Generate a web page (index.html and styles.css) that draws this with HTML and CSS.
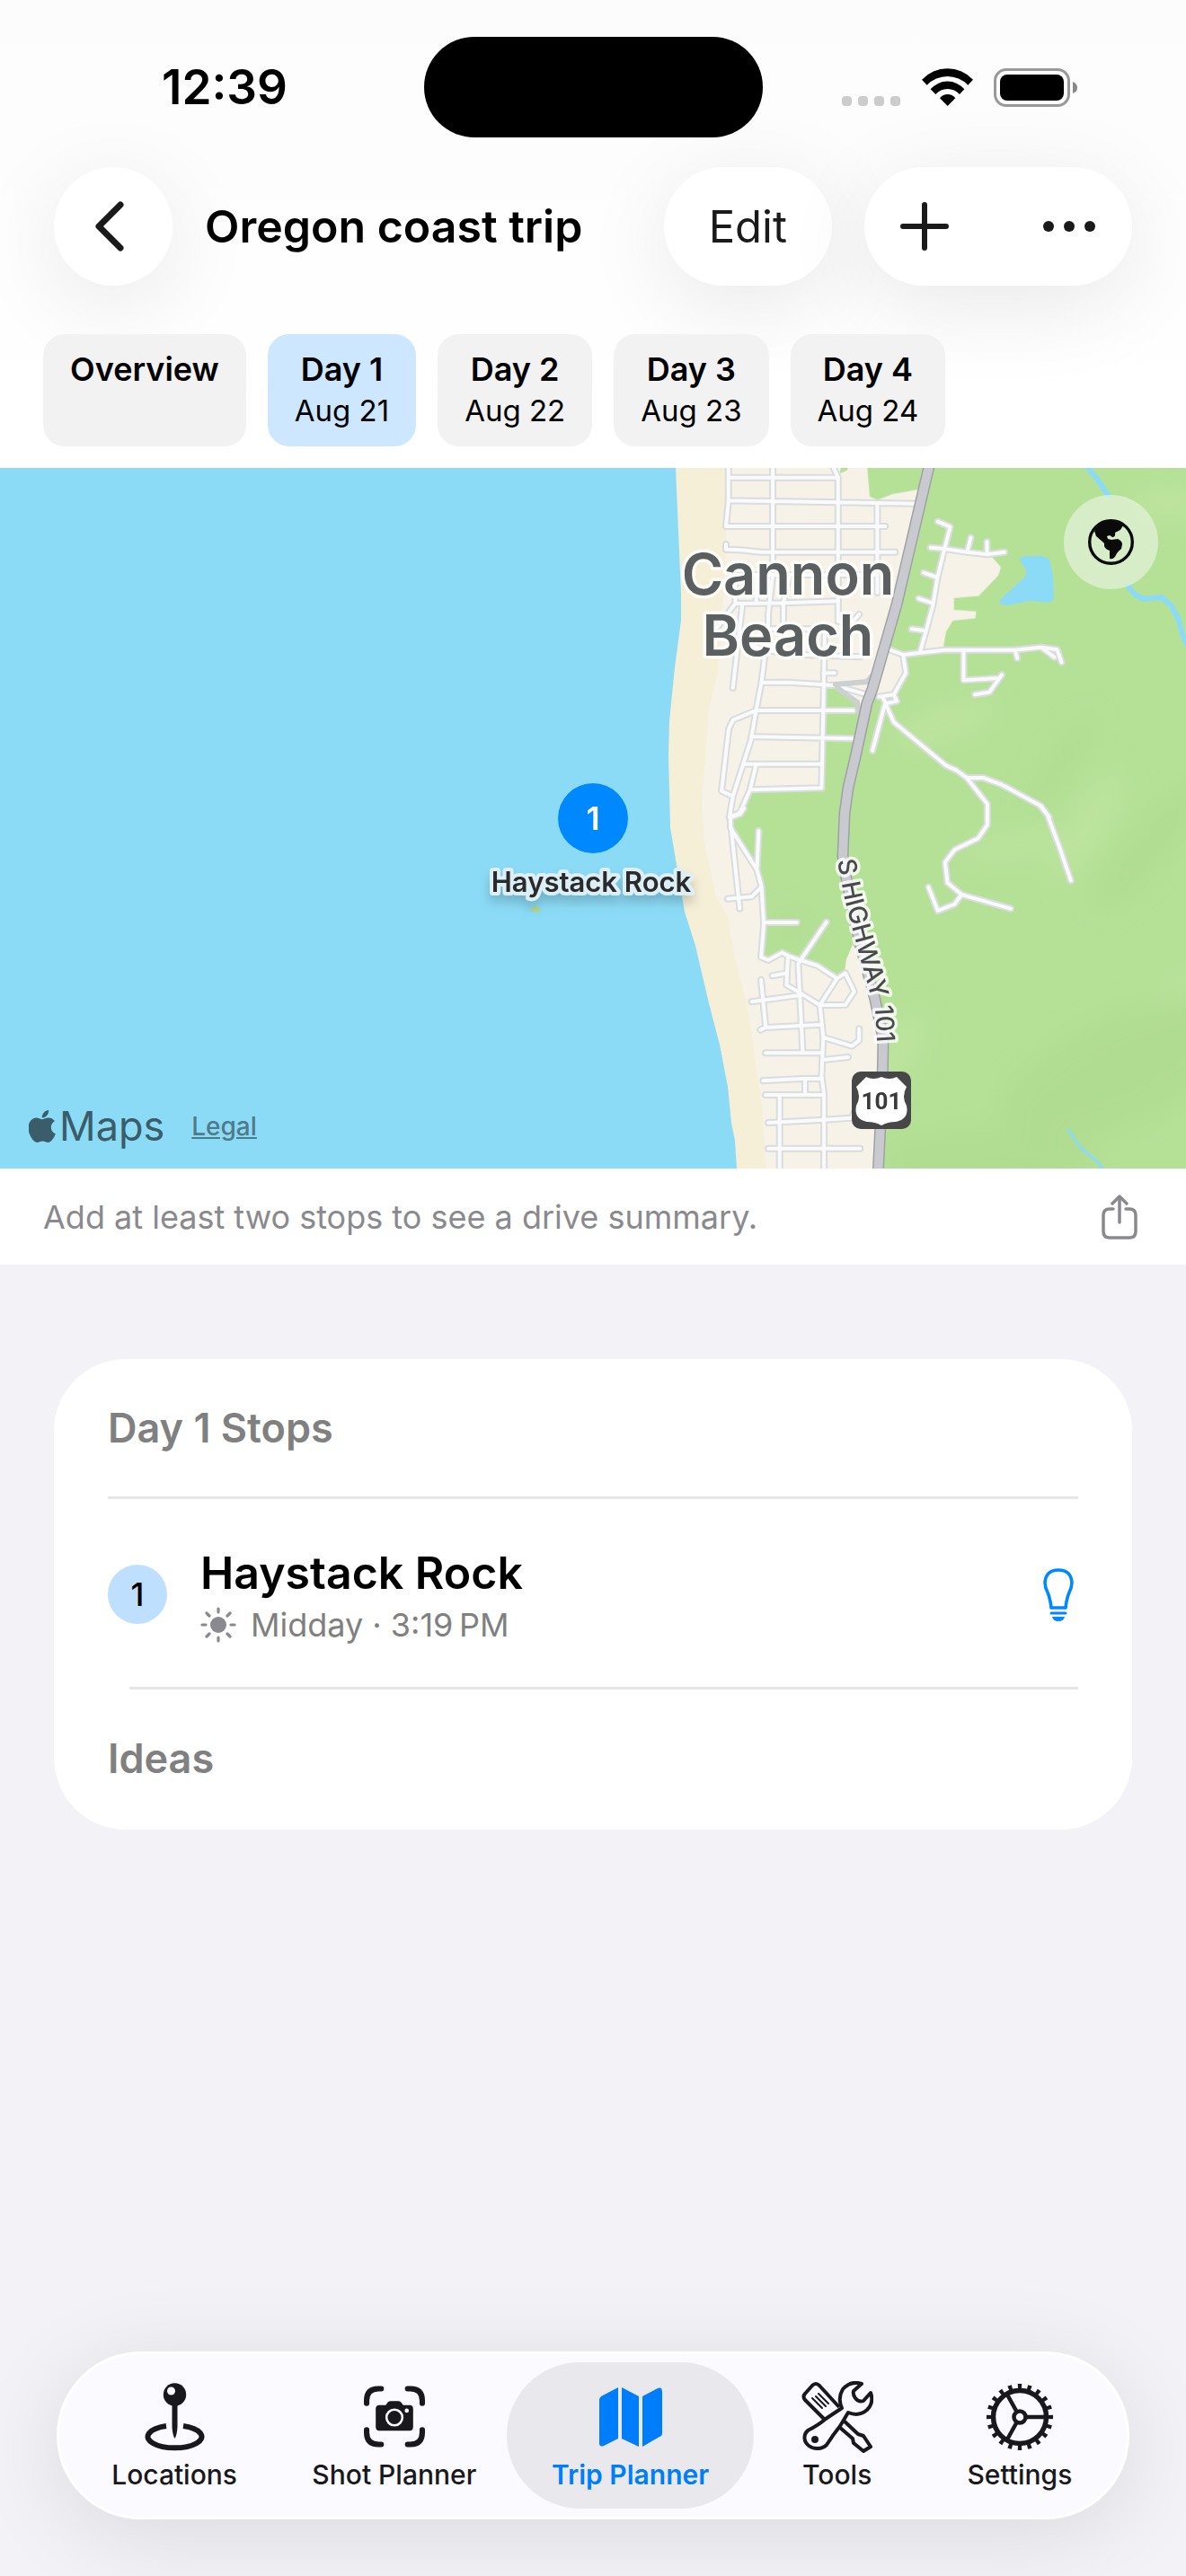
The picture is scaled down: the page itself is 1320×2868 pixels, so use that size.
FILE: index.html
```html
<!DOCTYPE html>
<html lang="en">
<head>
  <meta charset="UTF-8">
  <meta name="viewport" content="width=device-width, initial-scale=1.0">
  <title>Oregon coast trip</title>
  <link rel="stylesheet" href="styles.css">
</head>
<body>
  <header class="header">
    <div class="status">
      <time class="status-time">12:39</time>
      <div class="island"></div>
      <div class="status-icons">
        <svg class="signal" width="66" height="12" viewBox="0 0 66 12">
          <rect width="11" height="11" rx="4" />
          <rect x="18" width="11" height="11" rx="4" />
          <rect x="36" width="11" height="11" rx="4" />
          <rect x="54" width="11" height="11" rx="4" />
        </svg>
        <svg width="57" height="42" viewBox="0 0 171 126">
          <path d="M0 38A116 116 0 0 1 171 38L154 56A95 95 0 0 0 17 56Z" />
          <path d="M29 70A74 74 0 0 1 142 70L126 87A53 53 0 0 0 46 87Z" />
          <path d="M60 100A32 32 0 0 1 112 100L86 126Z" />
        </svg>
        <svg width="94" height="43" viewBox="0 0 94 43">
          <rect x="1.5" y="1.5" width="82" height="40" rx="12.5" fill="none" stroke="#999" stroke-width="3" />
          <rect x="7" y="7" width="71" height="29" rx="8" />
          <path d="M88 15q5 2 5 6.5t-5 6.5z" fill="#888" />
        </svg>
      </div>
    </div>

    <div class="nav">
      <button class="glass back" type="button" aria-label="Back">
        <svg width="42" height="58" viewBox="0 0 42 58">
          <path d="M29 5L5 29l24 24" fill="none" stroke="#1a1a1a" stroke-width="7" stroke-linecap="round" stroke-linejoin="round" />
        </svg>
      </button>
      <h1>Oregon coast trip</h1>
      <button class="glass edit" type="button">Edit</button>
      <div class="glass actions">
        <button type="button" aria-label="Add">
          <svg width="54" height="54" viewBox="0 0 54 54">
            <path d="M27 3v48M3 27h48" stroke="#1a1a1a" stroke-width="6" stroke-linecap="round" />
          </svg>
        </button>
        <button type="button" aria-label="More">
          <svg width="60" height="14" viewBox="0 0 60 14" fill="#1a1a1a">
            <circle cx="7" cy="7" r="6" />
            <circle cx="30" cy="7" r="6" />
            <circle cx="53" cy="7" r="6" />
          </svg>
        </button>
      </div>
    </div>

    <div class="days">
      <button class="day" type="button"><b>Overview</b></button>
      <button class="day selected" type="button"><b>Day 1</b><span>Aug 21</span></button>
      <button class="day" type="button"><b>Day 2</b><span>Aug 22</span></button>
      <button class="day" type="button"><b>Day 3</b><span>Aug 23</span></button>
      <button class="day" type="button"><b>Day 4</b><span>Aug 24</span></button>
    </div>
  </header>

  <main>
    <section class="map">
      <svg class="map-canvas" viewBox="0 0 1320 780" preserveAspectRatio="xMidYMid slice">
        <defs>
          <filter id="soft" x="-50%" y="-50%" width="200%" height="200%">
            <feGaussianBlur stdDeviation="14" />
          </filter>
          <filter id="label-shadow" x="-10%" y="-50%" width="120%" height="250%">
            <feDropShadow dx="0" dy="8" stdDeviation="6" flood-color="#000" flood-opacity=".18" />
          </filter>
          <!-- town streets, north half and south half -->
          <g id="streets">
            <g transform="translate(720 -11) scale(.3827 .3333)">
              <path d="M237 20V145L230 228H693M366 20V345M543 33L556 65V545L580 548 600 545 617 522M237 65H556M237 142L556 148 780 152M670 150V450M230 288V305L270 307 330 314H722" />
              <path d="M257 390H670M257 395V486M318 395V486M366 390L353 520V570M414 395L397 486V550M205 565L257 486 400 484 556 478M278 486L250 768M300 571H515M300 628L350 640 400 655 620 664" />
              <path d="M345 640L333 750 318 840 303 940 250 1130 240 1200M517 580L513 840 508 1102 300 1108 270 1185 240 1200M513 718H546M333 750L410 749 515 757 550 760 640 790M600 843H318L250 875 238 905 217 1112 250 1130M303 930L600 937M280 1022H508M318 1022L300 1108" />
              <path d="M846 212L882 230 865 305 845 400 832 490 812 577 795 645M825 299L865 303 930 314 990 322 1040 314M931 314L942 266M989 322V280M845 399L805 383M832 485L790 469M812 577L770 571" />
              <path d="M705 640L745 657 865 641H1070L1146 632 1193 640 1206 682M1146 632L1185 665M1071 641L1077 668M921 641V742L1025 735 1032 724 996 782 954 790M745 657L753 718 718 790 675 797M718 790L727 812 695 820 685 797M693 818L656 977M693 818L718 882 870 1027 900 1043 930 1068 990 1155V1215M930 1068H978L1030 1090 1146 1162 1170 1200" />
            </g>
            <g transform="translate(720 379) scale(.3827 .3333)">
              <path d="M243 10V65L320 205 333 260 340 385 332 497 353 507 393 482 415 495 495 525 553 568 503 657H577L603 612 577 550 553 568M282 0L272 18 243 30M325 75L320 205M245 65L270 335M235 302L305 295 333 262M340 381H436M522 380L448 505 440 520 453 810M410 495L406 590 450 620 503 657 513 765 508 895 515 955V1215M365 559L408 550" />
              <path d="M305 646L450 623M332 573L345 725M330 740L345 732 510 722M513 765L596 794 617 775V736M345 817H508M513 840L585 831M338 910L450 903H508M460 903V955M345 957H515M386 957V1215M353 1050L515 1040 595 1034 605 1010M353 1136H620" />
              <path d="M990 0V55L963 100 895 138 867 180 874 248 915 288 895 320 846 342 819 263M915 288L1058 335M1146 -5L1165 22 1200 130 1233 241" />
            </g>
          </g>
          <path id="highway" d="M1035 -6L998 152 971 246 965 262 952 322 944 356 940 385 938 432 942 457 957 529 974 592 983 636 982 690 977 790" />
          <path id="highway-label" d="M932 437L940 480 958 548 974 604 978 670" />
        </defs>

        <rect class="water" width="1320" height="780" />
        <path class="beach" d="M752 0L758 140 758 170 751 222 745 282 744 320 746 400 753 442 762 494 774 532 789 596 801 642 810 689 814 729 818 749 820 780H1320V0Z" />
        <path class="forest" d="M835 0H1320V780H950V700L845 560 810 480V330Z" />

        <g class="hills" filter="url(#soft)">
          <ellipse class="light" cx="1050" cy="285" rx="60" ry="18" transform="rotate(-20 1050 285)" />
          <ellipse class="light" cx="1130" cy="420" rx="60" ry="12" transform="rotate(-12 1130 420)" />
          <ellipse class="light" cx="1210" cy="400" rx="18" ry="70" transform="rotate(32 1210 400)" />
          <ellipse class="light" cx="1000" cy="650" rx="18" ry="50" transform="rotate(30 1000 650)" />
          <ellipse class="light" cx="1290" cy="600" rx="60" ry="10" transform="rotate(-40 1290 600)" />
          <ellipse class="light" cx="1300" cy="40" rx="40" ry="20" />
          <ellipse class="dark" cx="1180" cy="330" rx="12" ry="64" transform="rotate(36 1180 330)" />
          <ellipse class="dark" cx="1280" cy="420" rx="20" ry="90" transform="rotate(40 1280 420)" />
          <ellipse class="dark" cx="1250" cy="670" rx="150" ry="60" transform="rotate(-24 1250 670)" />
          <ellipse class="dark" cx="1100" cy="770" rx="120" ry="30" />
          <ellipse class="dark" cx="880" cy="510" rx="24" ry="10" transform="rotate(-40 880 510)" />
        </g>

        <g class="town">
          <path transform="translate(720 -11) scale(.3827 .3333)" d="M230 20H567L560 52 583 40 587 20H640L648 128 670 140 715 120 790 105 720 490 655 770 628 890 605 820 545 765 515 770 512 1105 300 1110 270 1190 240 1210H162L160 1120 172 980 178 850 205 720 215 600 230 300ZM705 640L745 657 755 720 718 790 650 800 670 700ZM865 305L1000 325 1030 365 1022 392 965 460 893 468V507L958 512 955 535 890 543 870 580 862 632 797 645Z" />
          <path transform="translate(720 379) scale(.3827 .3333)" d="M162 0H243V70L320 210 335 260 340 400 330 495 350 508 395 480 450 510 550 565 575 545 580 505 598 455 640 520 670 640 700 800 672 1210H347L335 1000 310 800 290 650 260 520 235 360 200 290 165 100Z" />
        </g>

        <path class="water" d="M1134 101L1141 98H1160L1168 101 1172 119 1173 146 1168 150 1146 148 1122 153 1112 151 1114 146 1141 121 1143 115Z" />
        <path class="stream" d="M1209 -2L1221 12 1233 30M1256 132L1262 140 1273 146 1293 144 1304 154 1312 169 1316 186 1322 198" />
        <path class="creek" d="M1189 737L1203 757 1222 773 1229 782" />

        <use href="#streets" class="street-edge" />
        <use href="#streets" class="street" />
        <path class="ramp" d="M930 241L965 238 972 230M932 245L954 261 959 284" />
        <use href="#highway" class="highway-edge" />
        <use href="#highway" class="highway" />

        <text class="city"><tspan x="877" y="141">Cannon</tspan><tspan x="877" y="209">Beach</tspan></text>
        <text class="highway-name"><textPath href="#highway-label">S HIGHWAY 101</textPath></text>

        <g class="shield">
          <rect x="948" y="672" width="66" height="64" rx="10" fill="#474747" />
          <path fill="#fff" d="M964 678q8 4 17 0 9 4 17 0l11 11q-6 11 0 21 3 15-12 18-9 0-16 4-7-4-16-4-15-3-12-18 6-10 0-21z" />
          <text x="981" y="714">101</text>
        </g>

        <path d="M590 493l5-6 7 4-2 4z" fill="#b3d98a" />
        <circle cx="660" cy="390" r="39" fill="#08f" />
        <text class="pin-number" x="660" y="403">1</text>
        <g filter="url(#label-shadow)">
          <text class="pin-name" x="658" y="472">Haystack Rock</text>
        </g>
      </svg>

      <button class="globe" type="button" aria-label="Map style">
        <svg width="51" height="51" viewBox="0 0 51 51" fill="#0a0a0a">
          <circle cx="25.5" cy="25.5" r="23.8" fill="none" stroke="#0a0a0a" stroke-width="3.4" />
          <path d="M7 13Q13 3 25 1 33 2 39 7L36 12 30 15Q31 20 27 20L24 18 21 19 22 22 26 23 33 22Q38 24 38 28L37 33Q32 37 31 40 29 45 24 44L24 35Q17 33 18 27L16 25 9 19Z" />
        </svg>
      </button>

      <div class="attribution">
        <a class="brand" href="#">
          <svg width="30" height="36" viewBox="19 4 135 162">
            <path d="M150.37 130.25c-2.45 5.66-5.35 10.87-8.71 15.66-4.58 6.53-8.33 11.05-11.22 13.56-4.48 4.12-9.28 6.23-14.42 6.35-3.69 0-8.14-1.05-13.32-3.18-5.2-2.12-9.97-3.17-14.34-3.17-4.58 0-9.49 1.05-14.75 3.17-5.26 2.13-9.5 3.24-12.74 3.35-4.93.21-9.84-1.96-14.75-6.52-3.13-2.73-7.04-7.41-11.73-14.04-5.03-7.08-9.17-15.29-12.41-24.65-3.47-10.11-5.21-19.9-5.21-29.38 0-10.86 2.34-20.22 7.04-28.07 3.69-6.3 8.61-11.27 14.76-14.92s12.79-5.51 19.95-5.63c3.91 0 9.05 1.21 15.43 3.59 6.36 2.39 10.44 3.6 12.24 3.6 1.34 0 5.87-1.42 13.57-4.24 7.27-2.62 13.41-3.7 18.44-3.27 13.63 1.1 23.87 6.47 30.68 16.15-12.19 7.39-18.22 17.73-18.1 31 .11 10.34 3.86 18.94 11.23 25.77 3.34 3.17 7.07 5.62 11.22 7.36-.9 2.61-1.85 5.11-2.86 7.51zM119.11 7.24c0 8.1-2.96 15.67-8.86 22.67-7.12 8.32-15.73 13.13-25.07 12.37-.5-8.9 3.2-19.1 9.21-25.98 3-3.45 6.82-6.31 11.45-8.6 4.62-2.25 8.99-3.5 13.1-3.71z" />
          </svg>
          Maps
        </a>
        <a class="legal" href="#">Legal</a>
      </div>
    </section>

    <div class="summary">
      <p>Add at least two stops to see a drive summary.</p>
      <button type="button" aria-label="Share">
        <svg width="40" height="50" viewBox="0 0 40 50" fill="none" stroke="#8a8a8e" stroke-width="3.5" stroke-linecap="round" stroke-linejoin="round">
          <path d="M13 16H9q-7 0-7 7v18q0 7 7 7h22q7 0 7-7V23q0-7-7-7h-4M20 31V2M12 10l8-8 8 8" />
        </svg>
      </button>
    </div>

    <section class="card">
      <h2>Day 1 Stops</h2>
      <div class="stop">
        <span class="stop-number">1</span>
        <div class="stop-text">
          <h3>Haystack Rock</h3>
          <p>
            <svg width="40" height="40" viewBox="0 0 40 40">
              <circle cx="20" cy="20" r="9" fill="#8a8a8e" />
              <path d="M20 2v4M20 34v4M2 20h4M34 20h4M7 7l3 3M30 30l3 3M7 33l3-3M30 10l3-3" stroke="#8a8a8e" stroke-width="3.2" stroke-linecap="round" />
            </svg>
            Midday&nbsp;·&nbsp;3:19&thinsp;PM
          </p>
        </div>
        <button class="idea" type="button" aria-label="Idea">
          <svg width="36" height="60" viewBox="0 0 36 60" fill="none" stroke="#08f" stroke-width="3.6" stroke-linejoin="round">
            <path d="M10 45Q9 35 6 28 3 22 3 17 4 3 18 3T33 17Q33 22 30 28 27 35 26 45Z" />
            <path d="M10 51h16" stroke-width="3" stroke-linecap="round" />
            <path d="M11 55h14q-1 5-7 5t-7-5z" fill="#08f" stroke="none" />
          </svg>
        </button>
      </div>
      <h2>Ideas</h2>
    </section>
  </main>

  <nav class="tabs">
    <a class="tab" href="#">
      <svg width="67" height="76" viewBox="0 0 67 76">
        <circle cx="33.5" cy="13" r="12.7" />
        <circle cx="29.5" cy="9" r="4.5" fill="#fbfaff" />
        <path d="M30.5 24h6v25q-.5 9-3 13-2.5-4-3-13z" />
        <path d="M24 48A30 12.5 0 1 0 43 48" fill="none" stroke="currentColor" stroke-width="6" />
      </svg>
      Locations
    </a>
    <a class="tab" href="#">
      <svg width="68" height="76" viewBox="0 -4 67 76">
        <path d="M3 19v-3q0-13 13-13h3M48 3h3q13 0 13 13v3M64 48v3q0 13-13 13h-3M19 64h-3Q3 64 3 51v-3" fill="none" stroke="currentColor" stroke-width="6" stroke-linecap="round" />
        <path d="M17 21h7l2-3q1-1.5 3-1.5h9q2 0 3 1.5l2 3h7q4 0 4 4v20q0 4-4 4H17q-4 0-4-4V25q0-4 4-4z" />
        <circle cx="33.5" cy="34.5" r="8.7" fill="none" stroke="#fbfaff" stroke-width="2.5" />
        <circle cx="47" cy="27" r="2.3" fill="#fbfaff" />
      </svg>
      Shot Planner
    </a>
    <a class="tab current" href="#">
      <svg width="70" height="76" viewBox="0 -5 70 76">
        <path d="M0 14q0-2 2-4L21 0v57L5 65q-5 2-5-3zM25 0l19 10v56L25 57zM48 10L65 1q5-2 5 4v46q0 3-3 4L48 66z" />
      </svg>
      Trip Planner
    </a>
    <a class="tab" href="#">
      <svg width="80" height="80" viewBox="0 0 80 80" fill="none" stroke="currentColor" stroke-width="4" stroke-linejoin="round">
        <path d="M26 43L4 21q-3-4 0-7l8-9q4-4 8 0l22 24" />
        <path d="M12 19l11 11M16 17l11 11M19 14l11 11" stroke-width="2" stroke-linecap="round" />
        <path d="M47 44l16 15 6 2 8 12-8 5-11-9-1-5-15-13" />
        <path class="wrench" d="M67 3L58 11Q57 15 60 19 64 24 69 22L77 13Q81 24 73 32 64 40 52 35L43 50Q35 60 28 71A14 12 0 1 1 7 55Q19 49 27 42L45 30Q40 19 46 9 55-1 67 3Z" />
        <circle cx="15" cy="65" r="4" fill="currentColor" stroke="none" />
      </svg>
      Tools
    </a>
    <a class="tab" href="#">
      <svg width="76" height="76" viewBox="0 0 76 76" fill="none" stroke="currentColor">
        <circle cx="38" cy="38" r="29.5" stroke-width="5.5" />
        <circle cx="38" cy="38" r="34" stroke-width="6" pathLength="200" stroke-dasharray="4 6" stroke-dashoffset="2" />
        <circle cx="38" cy="38" r="6.5" stroke-width="4.5" />
        <path d="M46 38h20M34 31L24 13M34 45L24 63" stroke-width="4.5" />
      </svg>
      Settings
    </a>
  </nav>
</body>
</html>
```
FILE: styles.css
```css
* {
  box-sizing: border-box;
}

body {
  display: flex;
  flex-direction: column;
  min-height: 100vh;
  margin: 0;
  background: #f2f2f7;
  color: #000;
  font-family: Inter, "Liberation Sans", sans-serif;
}

h1,
h2,
h3,
p {
  margin: 0;
}

svg {
  display: block;
  flex: none;
}

button {
  padding: 0;
  border: 0;
  background: none;
  color: inherit;
  font: inherit;
}

a {
  color: inherit;
  text-decoration: none;
}

/* header */

.header {
  padding: 41px 0 24px;
  background: linear-gradient(#fcfcfc, #fff 90%);
  overflow: hidden;
}

.status {
  display: grid;
  grid-template-columns: 1fr 377px 1fr;
  align-items: center;
}

.status-time {
  padding-left: 180px;
  font-size: 53px;
  font-weight: 600;
}

.island {
  height: 112px;
  border-radius: 56px;
  background: #000;
}

.status-icons {
  display: flex;
  align-items: center;
  justify-content: flex-end;
  gap: 23px;
  padding-right: 120px;
}

.signal {
  align-self: flex-end;
  fill: #ccc;
}

.nav {
  display: flex;
  align-items: center;
  margin-top: 33px;
  padding: 0 60px;
}

.nav h1 {
  flex: 1;
  margin-left: 36px;
  font-size: 50px;
  font-weight: 600;
}

.glass {
  display: flex;
  align-items: center;
  justify-content: center;
  height: 132px;
  border-radius: 66px;
  background: #fff;
  box-shadow: 0 20px 100px rgba(0, 0, 0, 0.09);
}

.back {
  width: 132px;
}

.edit {
  margin-right: 36px;
  padding: 0 50px;
  color: #1a1a1a;
  font-size: 49px;
}

.actions {
  justify-content: space-between;
  width: 298px;
  padding: 0 40px;
}

.days {
  display: flex;
  gap: 24px;
  margin-top: 54px;
  padding: 0 48px;
}

.day {
  display: flex;
  flex-direction: column;
  align-items: center;
  height: 125px;
  padding: 16px 30px;
  border-radius: 24px;
  background: #f2f2f2;
  font-size: 33px;
  line-height: 46px;
}

.day b {
  font-size: 36px;
  font-weight: 600;
}

.day.selected {
  background: #cce7ff;
}

/* map */

.map {
  position: relative;
  height: 780px;
}

.map-canvas {
  width: 100%;
  height: 100%;
}

.map-canvas path {
  stroke-linecap: round;
  stroke-linejoin: round;
  vector-effect: non-scaling-stroke;
}

.water {
  fill: #8cdbf6;
}

.beach {
  fill: #f5efd7;
}

.forest {
  fill: #b5e197;
}

.town {
  fill: #f6f2e7;
}

.hills .light {
  fill: #bde49d;
}

.hills .dark {
  fill: #b0dc92;
}

.stream,
.creek {
  fill: none;
  stroke: #8cdbf6;
  stroke-width: 6;
}

.creek {
  stroke-width: 3;
}

.street-edge {
  fill: none;
  stroke: #dadcdd;
  stroke-width: 8;
}

.street {
  fill: none;
  stroke: #f9fafb;
  stroke-width: 4;
}

.ramp {
  fill: none;
  stroke: #cdd0d0;
  stroke-width: 6;
}

.highway-edge {
  fill: none;
  stroke: #a0a1a5;
  stroke-width: 13;
}

.highway {
  fill: none;
  stroke: #c9cacf;
  stroke-width: 10;
}

.map-canvas text {
  paint-order: stroke;
  stroke-linejoin: round;
  text-anchor: middle;
}

.map-canvas .city {
  fill: #5b5f60;
  stroke: rgba(255, 255, 255, 0.8);
  stroke-width: 7px;
  font-size: 63px;
  font-weight: 600;
}

.map-canvas .highway-name {
  fill: #4a4a4c;
  stroke: rgba(255, 255, 255, 0.8);
  stroke-width: 7px;
  font-size: 28px;
  font-weight: 500;
  text-anchor: start;
}

.shield text {
  fill: #3a3a3a;
  font-family: "Liberation Sans Narrow", Roboto, sans-serif;
  font-size: 26px;
  font-weight: 700;
}

.pin-number {
  fill: #fff;
  font-size: 36px;
  font-weight: 600;
}

.pin-name {
  fill: #2b2b2b;
  stroke: #dceef6;
  stroke-width: 8px;
  font-size: 31px;
  font-weight: 600;
}

.globe {
  position: absolute;
  top: 30px;
  right: 31px;
  display: flex;
  align-items: center;
  justify-content: center;
  width: 105px;
  height: 105px;
  border-radius: 50%;
  background: rgba(242, 248, 240, 0.55);
}

.attribution {
  position: absolute;
  bottom: 20px;
  left: 32px;
  display: flex;
  align-items: center;
  gap: 30px;
  color: #3b5c69;
}

.brand {
  display: flex;
  align-items: center;
  gap: 4px;
  font-size: 45px;
}

.brand svg {
  fill: currentColor;
}

.legal {
  color: #4f7a8a;
  font-size: 28px;
  font-weight: 500;
  text-decoration: underline;
}

.summary {
  display: flex;
  align-items: center;
  justify-content: space-between;
  height: 107px;
  padding: 0 54px 0 48px;
  background: #fff;
  color: #8a8a8e;
  font-size: 36px;
}

/* stops */

.card {
  margin: 105px 60px 0;
  padding: 0 60px 3px;
  border-radius: 80px;
  background: #fff;
}

.card h2 {
  color: #808080;
  font-size: 45px;
  font-weight: 600;
  line-height: 153px;
}

.stop {
  position: relative;
  display: flex;
  align-items: center;
  height: 215px;
  border-top: 3px solid #e6e6e6;
}

.stop::after {
  content: "";
  position: absolute;
  right: 0;
  bottom: 0;
  left: 24px;
  height: 3px;
  background: #e6e6e6;
}

.stop-number {
  width: 66px;
  border-radius: 50%;
  background: #bfdfff;
  font-size: 36px;
  font-weight: 500;
  line-height: 66px;
  text-align: center;
}

.stop-text {
  flex: 1;
  margin-left: 37px;
  padding-top: 8px;
}

.stop-text h3 {
  font-size: 50px;
  font-weight: 600;
  line-height: 60px;
}

.stop-text p {
  display: flex;
  align-items: center;
  gap: 16px;
  color: #808080;
  font-size: 36px;
  line-height: 56px;
}

.idea {
  margin-right: 4px;
}

/* tab bar */

.tabs {
  display: grid;
  grid-template-columns: 238fr 251fr 274fr 186fr 220fr;
  height: 187px;
  margin: auto 63px 63px;
  padding: 9px;
  border: 3px solid #fff;
  border-radius: 94px;
  background: #fbfaff;
  box-shadow: 0 16px 100px rgba(0, 0, 0, 0.1);
}

.tab {
  display: flex;
  flex-direction: column;
  align-items: center;
  justify-content: center;
  gap: 6px;
  border-radius: 82px;
  color: #19181c;
  font-size: 30px;
  font-weight: 500;
  line-height: 36px;
}

.tab svg {
  height: 80px;
}

.tab svg:not([fill]) {
  fill: currentColor;
}

.tab.current {
  background: #e9e9ed;
  color: #007dfa;
  font-weight: 600;
}

.wrench {
  fill: #fbfaff;
}
```
